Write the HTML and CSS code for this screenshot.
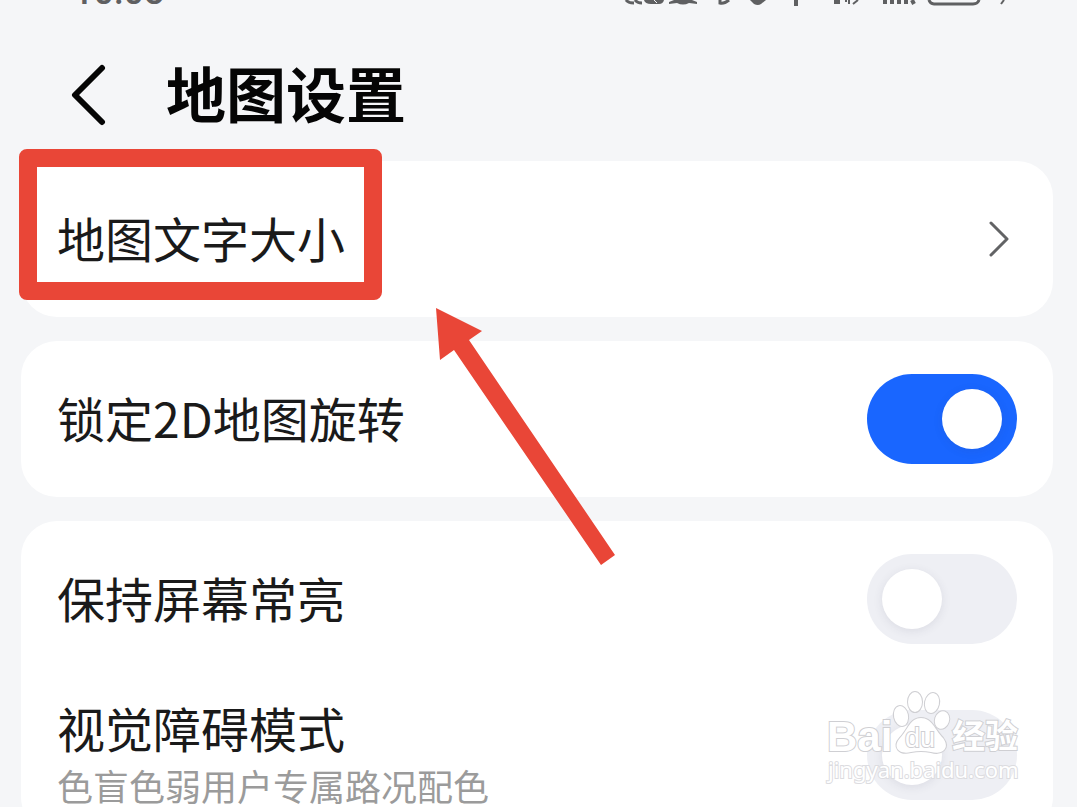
FILE: index.html
```html
<!DOCTYPE html>
<html lang="zh-CN">
<head>
<meta charset="utf-8">
<meta name="viewport" content="width=device-width, initial-scale=1">
<title>地图设置</title>
<link rel="stylesheet" href="styles.css">
</head>
<body>
<div class="screen">
  <div class="status">
    <span class="clock">10:08</span>
    <svg class="status-icons" width="390" height="8" viewBox="0 0 390 8" fill="none" stroke="#5f6062" stroke-width="3" aria-hidden="true">
      <path d="M6 0Q8 3 14 3M15 0Q17 3 22 3" />
      <path d="M24 0H44Q43 4 39 4H31Q25 4 24 0Z" fill="#5f6062" stroke="none"/>
      <path d="M34 0L37 3" stroke="#f5f6f8" stroke-width="1"/>
      <path d="M49 4V2L54 0H72L77 2V4L69 3Q63 6 57 3Z" fill="#5f6062" stroke="none"/>
      <path d="M100 0V3Q104 4 109 0"/>
      <path d="M130 0H146L141 4Q138 6 134 4Z" fill="#5f6062" stroke="none"/>
      <path d="M176 0V6" stroke-width="4"/>
      <path d="M217 0V4" stroke-width="6"/>
      <path d="M226 0V2M229 0V4M233 4L238 0" stroke-width="2"/>
      <path d="M265 0V4M272 0V4M279 0V4M286 0V4M294 4L292 0" stroke-width="4"/>
      <path d="M309 0Q310 4 314 4H353Q358 4 359 0"/>
      <path d="M381 4L384 0" stroke-width="2"/>
    </svg>
  </div>
  <header class="header">
    <button class="back" type="button" aria-label="返回">
      <svg width="36" height="62" viewBox="0 0 36 62" fill="none" stroke="#050505" stroke-width="6" stroke-linecap="round" stroke-linejoin="round"><path d="M32 4L5 31L32 58"/></svg>
    </button>
    <h1 class="title">地图设置</h1>
  </header>
  <main class="cards">
    <section class="card">
      <a class="row" href="#text-size">
        <span class="label">地图文字大小</span>
        <svg class="chevron" width="24" height="40" viewBox="0 0 24 40" fill="none" stroke="#626365" stroke-width="3" stroke-linecap="round" stroke-linejoin="round"><path d="M4 4L20 20L4 36"/></svg>
      </a>
      <span class="highlight"></span>
      <svg class="arrow" width="180" height="258" viewBox="0 0 180 258" aria-hidden="true"><path d="M0 0L46 23L33 32L179 247L165 257L18 42L4 52Z" fill="#e94637"/></svg>
    </section>
    <section class="card">
      <div class="row">
        <label class="label" for="lock">锁定2D地图旋转</label>
        <input class="switch" id="lock" type="checkbox" role="switch" checked>
      </div>
    </section>
    <section class="card">
      <div class="row">
        <label class="label" for="awake">保持屏幕常亮</label>
        <input class="switch" id="awake" type="checkbox" role="switch">
      </div>
      <div class="row">
        <label class="label" for="vision">视觉障碍模式<small class="hint">色盲色弱用户专属路况配色</small></label>
        <input class="switch" id="vision" type="checkbox" role="switch">
      </div>
    </section>
  </main>
  <svg class="watermark" width="200" height="96" viewBox="0 0 200 96" aria-hidden="true">
    <g fill="#fff" stroke="#cfcfd3" stroke-width="2" paint-order="stroke">
      <text class="wm-logo" x="0" y="61">Bai</text>
      <ellipse cx="74" cy="26" rx="7" ry="10" transform="rotate(-12 74 26)"/>
      <ellipse cx="88" cy="12" rx="7" ry="10"/>
      <ellipse cx="105" cy="13" rx="7" ry="10" transform="rotate(12 105 13)"/>
      <ellipse cx="115" cy="30" rx="7" ry="9" transform="rotate(18 115 30)"/>
      <path d="M94 28C105 28 108 40 116 48C124 59 114 65 104 62Q94 60 84 62C72 65 65 57 73 48C81 40 83 28 94 28Z"/>
      <text class="wm-du" x="78" y="57">du</text>
      <text class="wm-cjk" x="125" y="58">经验</text>
    </g>
    <text class="wm-url" x="1" y="88" fill="#fff" stroke="#dcdce0" stroke-width="2" paint-order="stroke">jingyan.baidu.com</text>
  </svg>
</div>
</body>
</html>
```
FILE: styles.css
```css
* {
  box-sizing: border-box;
}

body {
  margin: 0;
  overflow: hidden;
  background: #f5f6f8;
  color: #1a1a1a;
  font-family: "Noto Sans CJK SC", sans-serif;
}

.screen {
  position: relative;
  height: 100vh;
  overflow: hidden;
}

.status {
  display: flex;
  justify-content: space-between;
  align-items: flex-start;
  height: 29px;
  padding: 0 67px 0 73px;
}

.clock {
  height: 16px;
  margin-top: -32px;
  color: #5f6062;
  font: 500 36px/48px Roboto, sans-serif;
}

.header {
  display: flex;
  align-items: center;
  gap: 60px;
  height: 132px;
  padding-left: 70px;
}

.back {
  display: flex;
  padding: 0;
  border: 0;
  background: none;
}

.title {
  margin: 0;
  padding-bottom: 6px;
  color: #050505;
  font-size: 60px;
  font-weight: 700;
  line-height: 72px;
}

.cards {
  display: flex;
  flex-direction: column;
  gap: 24px;
  padding: 0 24px 24px 21px;
}

.card {
  position: relative;
  border-radius: 36px;
  background: #fff;
}

.row {
  display: flex;
  justify-content: space-between;
  align-items: center;
  height: 156px;
  padding: 0 36px;
  color: inherit;
  text-decoration: none;
}

.label {
  padding-bottom: 4px;
  font-size: 48px;
  line-height: 64px;
}

.hint {
  display: block;
  color: #9b9b9b;
  font-size: 36px;
  line-height: 52px;
}

.chevron {
  margin-right: 6px;
}

.switch {
  display: flex;
  align-items: center;
  flex: none;
  width: 150px;
  height: 90px;
  margin: 0;
  padding: 0 15px;
  border-radius: 45px;
  background: #eeeff4;
  appearance: none;
}

.switch::before {
  content: "";
  width: 60px;
  height: 60px;
  border-radius: 50%;
  background: #fff;
  box-shadow: 0 2px 10px rgba(60, 60, 90, 0.1);
}

.switch:checked {
  justify-content: flex-end;
  background: #1966ff;
}

.highlight {
  position: absolute;
  top: -12px;
  left: -2px;
  width: 363px;
  height: 151px;
  border: 18px solid #e94637;
  border-radius: 8px;
  pointer-events: none;
}

.arrow {
  position: absolute;
  z-index: 1;
  top: 147px;
  left: 415px;
  pointer-events: none;
}

.watermark {
  position: absolute;
  top: 690px;
  right: 50px;
  overflow: visible;
  pointer-events: none;
}

.wm-logo {
  font: 700 42px "Liberation Sans", sans-serif;
}

.wm-du {
  font: 400 27px "Liberation Sans", sans-serif;
}

.wm-cjk {
  font: 700 33px "Noto Sans CJK SC", sans-serif;
}

.wm-url {
  font: 400 22px "Noto Sans", sans-serif;
}
```
